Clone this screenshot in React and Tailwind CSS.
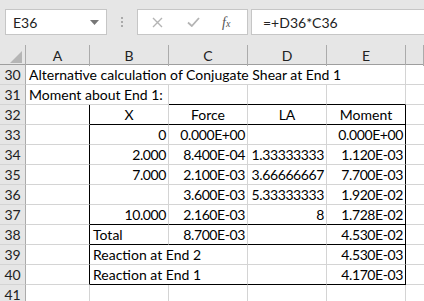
import React from 'react';

const GRID = 'border-[#d4d4d4]';

const rows = [
  { n: 30, cells: [{ span: 5, text: 'Alternative calculation of Conjugate Shear at End 1' }] },
  { n: 31, cells: [{ span: 2, text: 'Moment about End 1:' }, {}, {}, {}] },
  { n: 32, cells: [{}, { text: 'X', align: 'c' }, { text: 'Force', align: 'c' }, { text: 'LA', align: 'c' }, { text: 'Moment', align: 'c' }] },
  { n: 33, cells: [{}, { text: '0', align: 'r' }, { text: '0.000E+00', align: 'r' }, {}, { text: '0.000E+00', align: 'r' }] },
  { n: 34, cells: [{}, { text: '2.000', align: 'r' }, { text: '8.400E-04', align: 'r' }, { text: '1.33333333', align: 'r' }, { text: '1.120E-03', align: 'r' }] },
  { n: 35, cells: [{}, { text: '7.000', align: 'r' }, { text: '2.100E-03', align: 'r' }, { text: '3.66666667', align: 'r' }, { text: '7.700E-03', align: 'r' }] },
  { n: 36, cells: [{}, {}, { text: '3.600E-03', align: 'r' }, { text: '5.33333333', align: 'r' }, { text: '1.920E-02', align: 'r' }] },
  { n: 37, cells: [{}, { text: '10.000', align: 'r' }, { text: '2.160E-03', align: 'r' }, { text: '8', align: 'r' }, { text: '1.728E-02', align: 'r' }] },
  { n: 38, cells: [{}, { text: 'Total' }, { text: '8.700E-03', align: 'r' }, {}, { text: '4.530E-02', align: 'r' }] },
  { n: 39, cells: [{}, { span: 2, text: 'Reaction at End 2' }, {}, { text: '4.530E-03', align: 'r' }] },
  { n: 40, cells: [{}, { span: 2, text: 'Reaction at End 1' }, {}, { text: '4.170E-03', align: 'r' }] },
  { n: 41, cells: [{}, {}, {}, {}, {}] },
];

const spanClass = { 1: 'col-span-1', 2: 'col-span-2', 5: 'col-span-5' };

// table box spans columns B..E (index 1..4) and rows 32..40
const bottomBlack = [31, 32, 37, 38, 40];

function Cell({ cell, col, row }) {
  const span = cell.span || 1;
  const last = col + span - 1;
  const inTable = row >= 32 && row <= 40;
  const coversTable = last >= 1 && col <= 4;
  const rightBlack = inTable && (last === 0 || last === 4);
  const bottomIsBlack = bottomBlack.includes(row) && coversTable && col >= 1;
  const align =
    cell.align === 'r'
      ? 'justify-end pr-[2px] tracking-[-0.4px]'
      : cell.align === 'c'
      ? 'justify-center'
      : 'justify-start pl-[3px]';
  return (
    <div
      className={`${spanClass[span]} h-[20px] flex items-center border-r border-b whitespace-nowrap overflow-hidden ${align} ${
        rightBlack ? 'border-r-black' : 'border-r-[#d4d4d4]'
      } ${bottomIsBlack ? 'border-b-black' : 'border-b-[#d4d4d4]'}`}
    >
      {cell.text}
    </div>
  );
}

const App = () => {
  return (
    <div className="w-[424px] h-[301px] overflow-hidden bg-white text-[14px] text-black" style={{ fontFamily: 'Lato, "Liberation Sans", sans-serif' }}>
      {/* formula bar */}
      <div className="h-[45px] bg-[#e6e6e6] flex items-start pt-[9px] pl-[5px]">
        <div className="w-[102px] h-[26px] bg-white border border-[#c6c6c6] flex items-center pl-[7px] pr-[7px] justify-between">
          <span className="text-[#222]">E36</span>
          <svg width="9" height="5" viewBox="0 0 9 5"><path d="M0 0h9L4.5 5z" fill="#777" /></svg>
        </div>
        <div className="w-[30px] h-[26px] flex flex-col items-center justify-center gap-[2px]">
          <span className="w-[2px] h-[2px] bg-[#aaa]" />
          <span className="w-[2px] h-[2px] bg-[#aaa]" />
          <span className="w-[2px] h-[2px] bg-[#aaa]" />
        </div>
        <div className="w-[111px] h-[26px] bg-white border border-[#c6c6c6] flex items-center">
          <svg className="ml-[14px]" width="11" height="11" viewBox="0 0 11 11"><path d="M1 1l9 9M10 1l-9 9" stroke="#b4b4b4" strokeWidth="1.4" /></svg>
          <svg className="ml-[24px]" width="13" height="10" viewBox="0 0 13 10"><path d="M1 5.5l3.8 3.5L12 1" stroke="#b4b4b4" strokeWidth="1.8" fill="none" /></svg>
          <span className="ml-[22px] text-[14px] italic text-[#555]" style={{ fontFamily: '"Liberation Serif", serif' }}>f<span className="text-[10px]">x</span></span>
        </div>
        <div className="ml-[3px] flex-1 h-[26px] bg-white border border-[#c6c6c6] border-r-0 flex items-center pl-[11px] text-[#222]">
          =+D36*C36
        </div>
      </div>

      {/* column headers */}
      <div className="grid grid-cols-[26px_64px_79px_79px_79px_79px_1fr] h-[20px] bg-[#e6e6e6] border-b border-[#9e9e9e] text-[#222]">
        <div className="border-r border-[#ababab] relative">
          <svg className="absolute right-[3px] bottom-[3px]" width="12" height="12" viewBox="0 0 12 12"><path d="M12 0V12H0z" fill="#b5b5b5" /></svg>
        </div>
        {['A', 'B', 'C', 'D', 'E', ''].map((c) => (
          <div key={c || 'F'} className="border-r border-[#ababab] flex items-center justify-center">{c}</div>
        ))}
      </div>

      {/* sheet rows */}
      {rows.map((r) => {
        let col = 0;
        return (
          <div key={r.n} className="grid grid-cols-[26px_64px_79px_79px_79px_79px_1fr]">
            <div className="h-[20px] bg-[#e6e6e6] border-r border-r-[#ababab] border-b border-b-[#d4d4d4] flex items-center justify-center text-[#222]">
              {r.n}
            </div>
            {r.cells.map((cell, i) => {
              const c = col;
              col += cell.span || 1;
              return <Cell key={i} cell={cell} col={c} row={r.n} />;
            })}
            <div className={`h-[20px] border-b ${GRID}`} />
          </div>
        );
      })}
    </div>
  );
};

export default App;
